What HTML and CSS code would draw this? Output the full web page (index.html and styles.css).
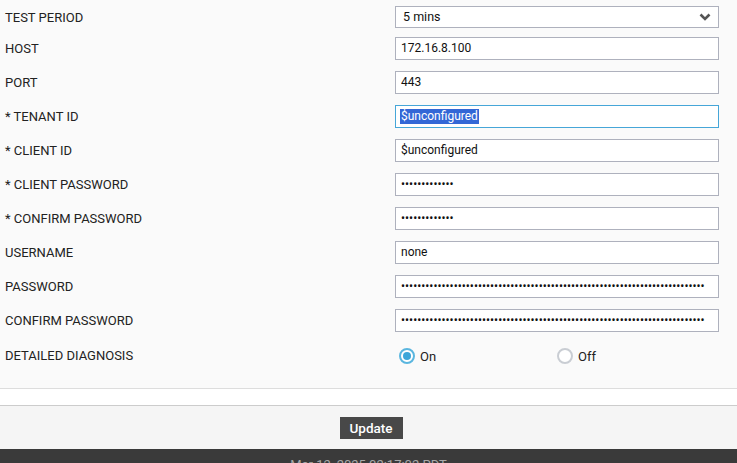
FILE: index.html
```html
<!DOCTYPE html>
<html lang="en">
  <head>
    <meta charset="UTF-8" />
    <meta name="viewport" content="width=device-width, initial-scale=1.0" />
    <title>Test Configuration</title>
    <link rel="stylesheet" href="styles.css">
  </head>
  <body>
    <form class="config-form">
      <div class="row first">
        <label>TEST PERIOD</label>
        <div class="select-box">
          <span>5 mins</span>
          <svg class="chevron" width="12" height="8" viewBox="0 0 12 8">
            <path d="M1.5 1.5 L6 6 L10.5 1.5" fill="none" stroke="#555" stroke-width="2.6" />
          </svg>
        </div>
      </div>
      <div class="row">
        <label>HOST</label>
        <input type="text" value="172.16.8.100" />
      </div>
      <div class="row">
        <label>PORT</label>
        <input type="text" value="443" />
      </div>
      <div class="row">
        <label>* TENANT ID</label>
        <div class="field focused"><span class="selected">$unconfigured</span></div>
      </div>
      <div class="row">
        <label>* CLIENT ID</label>
        <input type="text" value="$unconfigured" />
      </div>
      <div class="row">
        <label>* CLIENT PASSWORD</label>
        <input type="password" value="abcdefghijklm" />
      </div>
      <div class="row">
        <label>* CONFIRM PASSWORD</label>
        <input type="password" value="abcdefghijklm" />
      </div>
      <div class="row">
        <label>USERNAME</label>
        <input type="text" value="none" />
      </div>
      <div class="row">
        <label>PASSWORD</label>
        <input type="password" id="pw1" />
      </div>
      <div class="row">
        <label>CONFIRM PASSWORD</label>
        <input type="password" id="pw2" />
      </div>
      <div class="row last">
        <label>DETAILED DIAGNOSIS</label>
        <div class="radios">
          <span class="radio-opt"><span class="radio checked"></span>On</span>
          <span class="radio-opt"><span class="radio"></span>Off</span>
        </div>
      </div>
    </form>

    <div class="spacer"></div>

    <div class="actions">
      <button type="button" class="update-btn">Update</button>
    </div>

    <div class="status-bar">Mar 12, 2025 02:17:02 PDT</div>

    <script>
      // long masked values
      document.getElementById("pw1").value = "x".repeat(75);
      document.getElementById("pw2").value = "x".repeat(75);
    </script>
  </body>
</html>
```

FILE: styles.css
```css
body {
  margin: 0;
  font-family: Roboto, "Liberation Sans", sans-serif;
  font-size: 12px;
  color: #222;
  background: #fff;
}

.config-form {
  background: #fafafa;
  border-bottom: 1px solid #ddd;
  padding-bottom: 16px;
}

.row {
  display: flex;
  align-items: center;
  height: 34px;
}

.row.first {
  height: 31px;
}

.row.first label {
  padding-top: 3px;
}

.row.last {
  padding-top: 1px;
}

.row label {
  width: 395px;
  padding-left: 5px;
  box-sizing: border-box;
  font-size: 13px;
}

input,
.field,
.select-box {
  width: 324px;
  height: 23px;
  box-sizing: border-box;
  border: 1px solid #aeb1bd;
  background: #fff;
  font-family: Roboto, "Liberation Sans", sans-serif;
  font-size: 12px;
  color: #111;
  padding: 0 5px;
  margin: 0;
  outline: none;
}

input[type="password"] {
  font-size: 12px;
  letter-spacing: 0;
}

.field {
  display: flex;
  align-items: center;
  padding-left: 4px;
}

.focused {
  border-color: #46a6d8;
}

.selected {
  background: #3367d6;
  color: #fff;
  padding: 0 1px;
  line-height: 15px;
}

.select-box {
  display: flex;
  align-items: center;
  justify-content: space-between;
  height: 22px;
  padding: 0 7px 0 7px;
  margin-top: 2px;
  font-size: 12.5px;
}

.radios {
  display: flex;
  align-items: center;
  padding-left: 4px;
  padding-top: 2px;
}

.radio-opt {
  display: flex;
  align-items: center;
  width: 158px;
  font-size: 13px;
}

.radio {
  width: 12px;
  height: 12px;
  border: 2px solid #c9cdd3;
  border-radius: 50%;
  margin-right: 5px;
  background: #fff;
  position: relative;
}

.radio.checked {
  border-color: #5ab6df;
}

.radio.checked::after {
  content: "";
  position: absolute;
  top: 2px;
  left: 2px;
  width: 8px;
  height: 8px;
  border-radius: 50%;
  background: #3ba6d9;
}

.spacer {
  height: 16px;
  background: #fff;
  border-bottom: 1px solid #ccc;
}

.actions {
  background: #f5f5f5;
  display: flex;
  justify-content: center;
  padding: 11px 0 10px 5px;
}

.update-btn {
  background: #484848;
  color: #fff;
  border: none;
  font-family: Roboto, "Liberation Sans", sans-serif;
  font-size: 13.5px;
  font-weight: 500;
  width: 63px;
  height: 22px;
  padding: 0;
}

.status-bar {
  background: #3a3a3a;
  color: #a8a8a8;
  text-align: center;
  font-size: 13px;
  padding: 8px 0 10px;
}
```
